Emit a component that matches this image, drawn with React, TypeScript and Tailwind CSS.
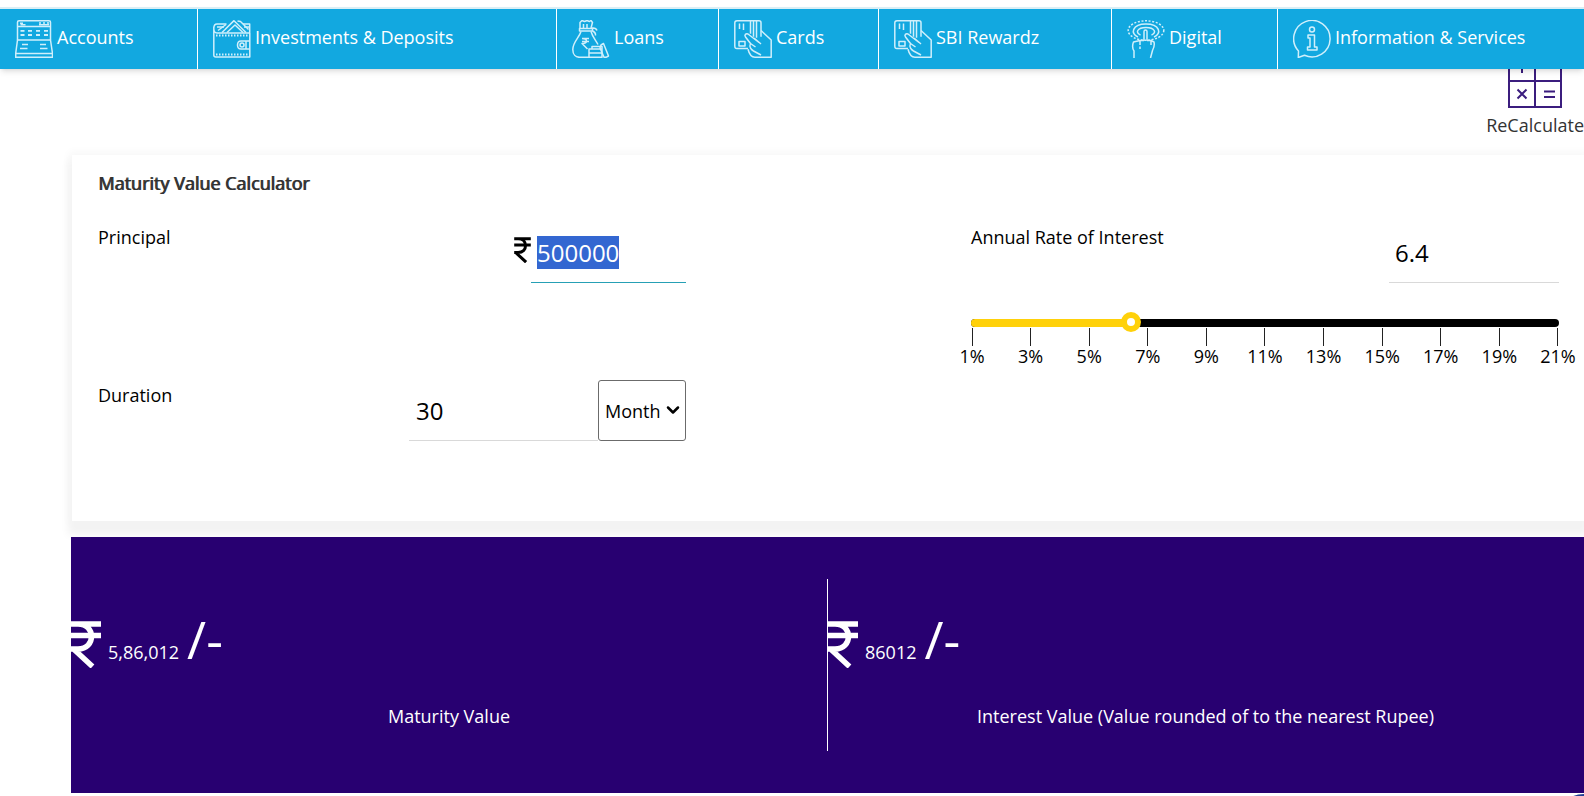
import { useEffect, useRef, useState } from 'react';
import type { ReactNode } from 'react';
import { ChevronDown } from 'lucide-react';

function NavIcon({ children }: { children: ReactNode }) {
  return (
    <svg
      viewBox="0 0 38 38"
      className="w-[38px] h-[38px] shrink-0"
      fill="none"
      stroke="#d0effb"
      strokeWidth="1.5"
      strokeLinejoin="round"
      aria-hidden="true"
    >
      {children}
    </svg>
  );
}

function AccountsIcon() {
  return (
    <NavIcon>
      <path d="M2.5 20V2.2Q2.5 .8 4 .8h30q1.500 0 1.500 1.400V20" />
      <path d="M2.500 6.500h33M2.500 20h33l2 13.500H.700zM.700 33.500v3.800h36.800v-3.800" />
      <path d="M5 3.200h3M5.500 4.800h5M24 3h2M28 3h2M32 3h2M24 4.800h10" />
      <path d="M5.500 10.800h4M13 10.800h4M21 10.800h4M29 10.800h4M5.500 15h4M13 15h4M21 15h4M29 15h4" strokeWidth="1.800" />
      <path d="M7 24.500h6M5 28.500h7.500M25 24.500h6M25 28.500h7.500" />
    </NavIcon>
  );
}

function WalletIcon() {
  return (
    <NavIcon>
      <path d="M.800 7v28q0 2 2 2h34V13H4Q.800 13 .800 8.500T4 4h9.500M30 4h6.700v9" />
      <path d="M9 12.500 21 .800l12 11.700M14 12.500l8-7.500 8 7.500M12 9.500l9-9M5 10.500l8-6M24.500 1l3 .500 8 8" />
      <path d="M4 7h7M31 7h5" />
      <path d="M3 15.500h33M3 34.500h33" strokeDasharray="1.500 1.500" strokeWidth="2" />
      <path d="M36.500 21H28q-3.500 0-3.500 4t3.500 4h8.500M33 21v8" />
      <circle cx="29" cy="25" r="2" />
    </NavIcon>
  );
}

function LoansIcon() {
  return (
    <NavIcon>
      <path d="M8 8V2.500l2-2 2.500 1 2.500-1 2.500 1 1.500-1 1.500 2-1.500 5.500M11.500 4v4M15 4v4" />
      <path d="M7.500 8.500h13v2.500h-13zM20 8q4-.500 5 2.500M20 10.500q4 2 3.500 5" />
      <path d="M9 11.500C7 18 .800 22 .800 29.500c0 5 3 7.800 6.700 7.800H17M19 11.500c1.500 5.500 5 9 7 13" />
      <path d="M10 18.500h7M10 21.500h7M10 18.500c6 0 6 5 0 5l5.500 5.500" />
      <path d="M17 29h13v8.300H17zM17 33h13M20 29v-2.500h10V29" />
      <path d="m29 25 2.500-1.500L36.500 36l-2.500 1.300h-2L28 28z" />
    </NavIcon>
  );
}

function CardHandIcon() {
  return (
    <NavIcon>
      <path d="M14 28.500H3Q.800 28.500.800 26V3Q.800.800 3 .800h22q2 0 2 2v14" />
      <path d="M5.500 3.500V9M9.500 3.500V10M16.500.800v13M19.500.800v16M22.500.800v17" />
      <path d="M5 21.500h6V26H5z" />
      <path d="M27 10.500 37.200 20v17.200H21c-4.500 0-6-4-7-8" />
      <path d="M25 22.500 14 14c-2-1-4 1-2.500 3l5 6.500c-1.500 3 .500 6 3 7.500l7.500 4M16.500 23.500l5 3.500M20 18l7 6" />
    </NavIcon>
  );
}

function DigitalIcon() {
  return (
    <NavIcon>
      <ellipse cx="19" cy="10.500" rx="17.800" ry="9.700" strokeDasharray="2 1.600" />
      <path d="M11 17C3 14 5 4 19 4s16 10 8 13" />
      <path d="M13.500 15C8 13 10 7.500 19 7.500s11 5.500 5.500 7.500" />
      <path d="M17 21V11.500q0-1.500 1.500-1.500t1.500 1.500V21" />
      <path d="M17 20.500H13l-6.500 1.500q-2 5 .500 9v7M13 26.500V29M20 20.500h4l3 1.500q1 4-1.500 8.500L23.500 38M13 21v4M24 21v4" />
    </NavIcon>
  );
}

function InfoIcon() {
  return (
    <NavIcon>
      <path d="M5.500 31A18.200 18.200 0 1 1 11.500 35.300L5.300 37.500z" />
      <circle cx="19" cy="9.500" r="2.500" />
      <path d="M15 15h6.500v12H24v3H14.500v-3H17v-9h-2z" />
    </NavIcon>
  );
}

function Rupee({ className }: { className: string }) {
  return (
    <svg viewBox="0 0 30 47" className={className} fill="none" stroke="currentColor" strokeWidth="5.5" aria-hidden="true">
      <path d="M0 3h30M0 14.500h30M0 28h7C25 28 25 3 7 3M2 27.500 21.500 45.500" />
    </svg>
  );
}

const navItems = [
  { label: 'Accounts', icon: AccountsIcon },
  { label: 'Investments & Deposits', icon: WalletIcon },
  { label: 'Loans', icon: LoansIcon },
  { label: 'Cards', icon: CardHandIcon },
  { label: 'SBI Rewardz', icon: CardHandIcon },
  { label: 'Digital', icon: DigitalIcon },
  { label: 'Information & Services', icon: InfoIcon },
];

const ticks = [1, 3, 5, 7, 9, 11, 13, 15, 17, 19, 21];

function NavBar() {
  return (
    <header className="relative z-10 pt-[7px]">
      <nav className="grid grid-cols-[198fr_359fr_162fr_160fr_233fr_166fr_306fr] border-t-2 border-[#d9eef5] bg-[#12a8e0] shadow-md">
        {navItems.map((item) => (
          <a
            key={item.label}
            href="#"
            className="flex h-[60px] items-center gap-1 border-r border-white pl-[15px] text-white whitespace-nowrap last:border-r-0"
          >
            <item.icon />
            <span className="pb-1">{item.label}</span>
          </a>
        ))}
      </nav>
    </header>
  );
}

function RateSlider({ rate, onChange }: { rate: number; onChange: (value: string) => void }) {
  const percent = ((rate - 1) / 20) * 100;

  return (
    <div className="mt-9">
      <div className="relative h-2 rounded-full bg-black">
        <div className="h-2 rounded-l-full bg-[#ffd10a]" style={{ width: `${percent}%` }} />
        <input
          type="range"
          min="1"
          max="21"
          step="0.1"
          value={rate}
          onChange={(e) => onChange(e.target.value)}
          aria-label="Annual Rate of Interest"
          className="absolute -inset-x-2 -top-[7px] h-5 appearance-none bg-transparent outline-none [&::-webkit-slider-thumb]:size-5 [&::-webkit-slider-thumb]:appearance-none [&::-webkit-slider-thumb]:rounded-full [&::-webkit-slider-thumb]:border-6 [&::-webkit-slider-thumb]:border-[#ffd10a] [&::-webkit-slider-thumb]:bg-white"
        />
      </div>
      <div className="mt-px flex justify-between px-px">
        {ticks.map((tick) => (
          <div key={tick} className="flex w-0 flex-col items-center">
            <span className="h-[18px] w-px bg-[#222]" />
            <span className="leading-5">{tick}%</span>
          </div>
        ))}
      </div>
    </div>
  );
}

function Result({ value, label }: { value: string; label: string }) {
  return (
    <div className="h-[172px] border-l border-white pt-[30px] text-white first:border-l-0">
      <div className="flex h-16 items-baseline">
        <Rupee className="mr-[7px] h-[47px] w-[30px] translate-y-[9px]" />
        <span>{value}</span>
        <span className="ml-2 text-[52px] leading-[60px] font-medium">/-</span>
      </div>
      <p className="mt-[31px] text-center">{label}</p>
    </div>
  );
}

export default function App() {
  const [principal, setPrincipal] = useState('500000');
  const [rate, setRate] = useState('6.4');
  const [duration, setDuration] = useState('30');
  const principalRef = useRef<HTMLInputElement>(null);

  useEffect(() => {
    principalRef.current?.focus();
    principalRef.current?.select();
  }, []);

  return (
    <div className="h-screen overflow-hidden bg-white font-['Open_Sans','Noto_Sans',sans-serif] text-[18px] leading-6 text-black">
      <NavBar />

      <div className="-mt-[15px] flex justify-end">
        <button type="button" className="flex flex-col items-center text-[#333]">
          <svg viewBox="0 0 54 54" className="size-[54px]" fill="none" stroke="#3b1d7e" strokeWidth="2" aria-hidden="true">
            <path d="M1 1h52v52H1zM27 1v52M1 27h52" />
            <path d="M9 14h10M14 9v10M36 14h11M9.500 35.500l9 9M18.500 35.500l-9 9M36 37.500h11M36 43h11" />
          </svg>
          <span className="mt-[5px]">ReCalculate</span>
        </button>
      </div>

      <main className="ml-[71px]">
        <section className="ml-px mt-[18px] h-[366px] bg-white pl-[26px] pr-[25px] pt-4 shadow-[0_10px_8px_4px_#f3f3f3,0_0_8px_3px_#f7f7f7]">
          <h1 className="text-[#333] [text-shadow:1px_0_0_#333]">Maturity Value Calculator</h1>

          <div className="mt-[27px] grid grid-cols-2 gap-x-[285px]">
            <div>
              <div className="flex h-[61px] justify-between">
                <label htmlFor="principal" className="mt-[3px]">Principal</label>
                <div className="flex">
                  <Rupee className="mt-[15px] h-[26px] w-[17px]" />
                  <input
                    id="principal"
                    ref={principalRef}
                    value={principal}
                    onChange={(e) => setPrincipal(e.target.value)}
                    className="w-[155px] border-b border-[#26a0b5] px-1.5 text-[24px] outline-none selection:bg-[#3367d1] selection:text-white"
                  />
                </div>
              </div>

              <div className="mt-[97px] flex h-[61px] justify-between">
                <label htmlFor="duration" className="mt-[3px]">Duration</label>
                <div className="flex">
                  <input
                    id="duration"
                    value={duration}
                    onChange={(e) => setDuration(e.target.value)}
                    className="w-[189px] border-b border-[#d9d9d9] px-[7px] text-[24px] outline-none"
                  />
                  <div className="relative">
                    <select
                      aria-label="Duration unit"
                      className="h-full w-[88px] appearance-none rounded-[3px] border border-[#6b6b6b] bg-white pl-1.5 outline-none"
                    >
                      <option>Month</option>
                      <option>Year</option>
                      <option>Day</option>
                    </select>
                    <ChevronDown className="pointer-events-none absolute right-[3px] top-5 size-5" strokeWidth={3} />
                  </div>
                </div>
              </div>
            </div>

            <div>
              <div className="flex h-[61px] justify-between">
                <label htmlFor="rate" className="mt-[3px]">Annual Rate of Interest</label>
                <input
                  id="rate"
                  value={rate}
                  onChange={(e) => setRate(e.target.value)}
                  className="w-[170px] border-b border-[#d9d9d9] px-1.5 text-[24px] outline-none"
                />
              </div>
              <RateSlider rate={Number(rate)} onChange={setRate} />
            </div>
          </div>
        </section>

        <section className="relative mt-4 grid grid-cols-2 bg-[#280071] py-[42px] pr-px">
          <Result value="5,86,012" label="Maturity Value" />
          <Result value="86012" label="Interest Value (Value rounded of to the nearest Rupee)" />
        </section>
      </main>

      <button type="button" aria-label="Chat" className="fixed -bottom-[58px] -right-[30px] size-[60px] rounded-full bg-[#1f3f94]" />
    </div>
  );
}
